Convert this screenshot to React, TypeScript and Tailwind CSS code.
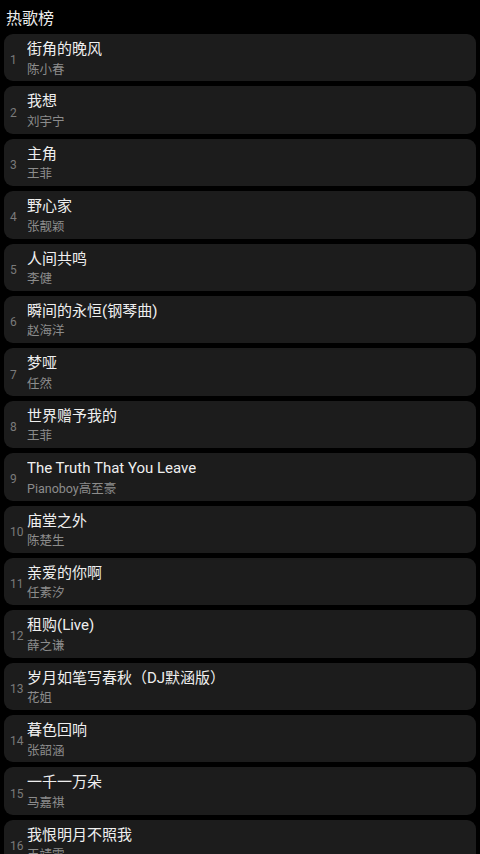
const songs = [
  { title: "街角的晚风", artist: "陈小春" },
  { title: "我想", artist: "刘宇宁" },
  { title: "主角", artist: "王菲" },
  { title: "野心家", artist: "张靓颖" },
  { title: "人间共鸣", artist: "李健" },
  { title: "瞬间的永恒(钢琴曲)", artist: "赵海洋" },
  { title: "梦哑", artist: "任然" },
  { title: "世界赠予我的", artist: "王菲" },
  { title: "The Truth That You Leave", artist: "Pianoboy高至豪" },
  { title: "庙堂之外", artist: "陈楚生" },
  { title: "亲爱的你啊", artist: "任素汐" },
  { title: "租购(Live)", artist: "薛之谦" },
  { title: "岁月如笔写春秋（DJ默涵版）", artist: "花姐" },
  { title: "暮色回响", artist: "张韶涵" },
  { title: "一千一万朵", artist: "马嘉祺" },
  { title: "我恨明月不照我", artist: "王靖雯" },
]

export default function App() {
  return (
    <div
      className="min-h-screen bg-black pb-4"
      style={{ fontFamily: 'Roboto, "Noto Sans CJK SC", sans-serif' }}
    >
      <div className="h-[34px] px-[6px] pt-[7px] text-[16px] leading-[24px] text-[#eeeeee]">
        热歌榜
      </div>
      <div className="flex flex-col gap-[5px] px-1">
        {songs.map((s, i) => (
          <div
            key={i}
            className="flex h-[47.4px] items-start rounded-[9px] bg-[#1c1c1c] pt-[5px]"
          >
            <div className="w-[23px] shrink-0 self-center pl-[6px] text-[12px] leading-[16px] text-[#7a7a7a]">
              {i + 1}
            </div>
            <div className="flex min-w-0 flex-col">
              <div className="truncate text-[15px] leading-[20px] text-[#efefef]">
                {s.title}
              </div>
              <div className="mt-[1.5px] truncate text-[12.5px] leading-[18px] text-[#8c8c8c]">
                {s.artist}
              </div>
            </div>
          </div>
        ))}
      </div>
    </div>
  )
}
